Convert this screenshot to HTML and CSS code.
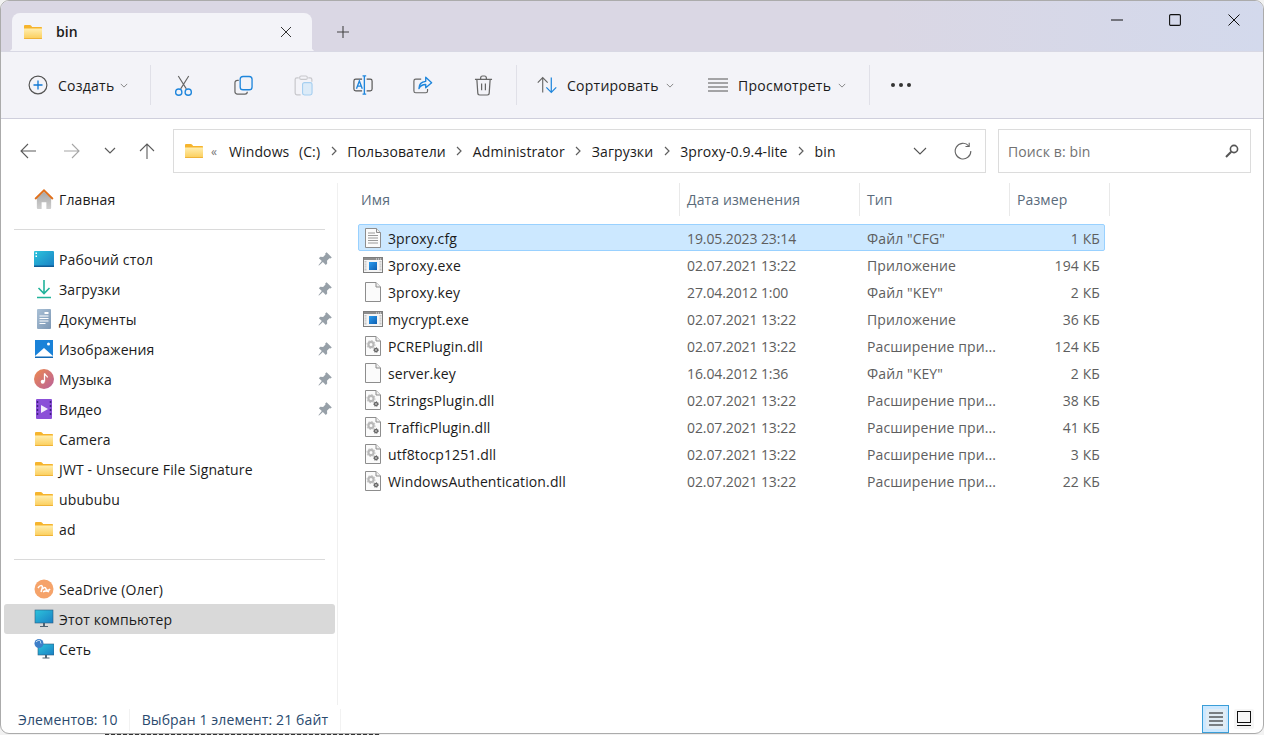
FILE: index.html
```html
<!DOCTYPE html>
<html lang="ru">
<head>
<meta charset="utf-8">
<title>bin</title>
<link rel="stylesheet" href="styles.css">
</head>
<body>
<svg class="defs" width="0" height="0" aria-hidden="true">
  <defs>
    <linearGradient id="fg" x1="0" y1="0" x2="0" y2="1"><stop offset="0" stop-color="#ffeeb0"/><stop offset="1" stop-color="#fbcd58"/></linearGradient>
    <linearGradient id="mon" x1="0" y1="0" x2="1" y2="1"><stop offset="0" stop-color="#2cc4dc"/><stop offset="1" stop-color="#1a7fc4"/></linearGradient>
    <linearGradient id="mus" x1="0" y1="0" x2="1" y2="1"><stop offset="0" stop-color="#ee8a4e"/><stop offset="1" stop-color="#b8609c"/></linearGradient>
    <linearGradient id="doc" x1="0" y1="0" x2="1" y2="1"><stop offset="0" stop-color="#a9c0d6"/><stop offset="1" stop-color="#7c97b4"/></linearGradient>
    <linearGradient id="exe" x1="0" y1="0" x2="1" y2="1"><stop offset="0" stop-color="#2a9cf0"/><stop offset="1" stop-color="#0f5fb0"/></linearGradient>
    <linearGradient id="home" x1="0" y1="0" x2="0" y2="1"><stop offset="0" stop-color="#a8a8a8"/><stop offset="1" stop-color="#cfcfcf"/></linearGradient>
    <symbol id="folder" viewBox="0 0 18 14"><path d="M0 1.200C0 .5.5 0 1.200 0h4.600c.5 0 .9.2 1.200.6L8.200 2H17c.6 0 1 .4 1 1v10c0 .6-.4 1-1 1H1c-.6 0-1-.4-1-1z" fill="#f6b42c"/><path d="M0 3.600h18V13c0 .6-.4 1-1 1H1c-.6 0-1-.4-1-1z" fill="url(#fg)"/><path d="M0 13h18c0 .6-.4 1-1 1H1c-.6 0-1-.4-1-1z" fill="#eeb238"/></symbol>
    <symbol id="chev" viewBox="0 0 10 6"><path d="M1 1l4 4 4-4" fill="none" stroke="currentColor" stroke-width="1"/></symbol>
    <symbol id="crumb" viewBox="0 0 6 10"><path d="M1 1l4 4-4 4" fill="none" stroke="currentColor" stroke-width="1.200"/></symbol>
    <symbol id="pin" viewBox="0 0 14 14"><path d="M8.600.2l5.200 5.200-1.400 1.200-1-.3-2.400 2.400.2 2.800-1.400 1.400-2.900-2.900L1 13.600l-.6-.4 3.400-4.100L.9 6.200l1.400-1.400 2.800.2 2.400-2.400-.3-1z" fill="#97a0a8"/></symbol>
    <symbol id="f-doc" viewBox="0 0 16 20"><path d="M.5.5h11l4 4v15H.5z" fill="#fbfbfb" stroke="#8d8d8d"/><path d="M11.500.5v4h4" fill="#eee" stroke="#8d8d8d"/><path d="M3 5h7M3 7.500h10M3 10h10M3 12.500h10M3 15h10" stroke="#9a9a9a" fill="none"/></symbol>
    <symbol id="f-blank" viewBox="0 0 16 20"><path d="M.5.5h10.500l4.500 4.500v14.500H.5z" fill="#fbfbfb" stroke="#8d8d8d"/><path d="M11 .5v4.500h4.500" fill="#f0f0f0" stroke="#8d8d8d"/></symbol>
    <symbol id="f-exe" viewBox="0 0 20 16"><rect x=".5" y=".5" width="19" height="15" fill="#f5f5f5" stroke="#7d7d7d"/><rect x="1" y="1" width="18" height="2" fill="#8d8d8d"/><path d="M13 2h1M15 2h1M17 2h1" stroke="#eee"/><path d="M2.500 4v10M17.500 4v10" stroke="#c4c4c4" stroke-width="2" stroke-dasharray="1 .6"/><rect x="6" y="5" width="8" height="8" fill="url(#exe)"/></symbol>
    <symbol id="f-dll" viewBox="0 0 16 20"><path d="M.5.5h10.500l4.500 4.500v14.500H.5z" fill="#fbfbfb" stroke="#8d8d8d"/><path d="M11 .5v4.500h4.500" fill="#f0f0f0" stroke="#8d8d8d"/><circle cx="6" cy="8.500" r="2.600" fill="none" stroke="#b8b8b8" stroke-width="2.200"/><circle cx="6" cy="8.500" r="4" fill="none" stroke="#c8c8c8" stroke-width="1.200" stroke-dasharray="1.500 1.600"/><circle cx="11" cy="14" r="1.500" fill="none" stroke="#666" stroke-width="1.400"/><circle cx="11" cy="14" r="2.500" fill="none" stroke="#777" stroke-width=".9" stroke-dasharray="1.100 1.200"/></symbol>
  </defs>
</svg>

<div class="window">
  <header class="tabbar">
    <div class="tab">
      <svg class="folder-icon"><use href="#folder"/></svg>
      <span class="tab-title">bin</span>
      <svg class="tab-close" viewBox="0 0 12 12"><path d="M1 1l10 10M11 1L1 11" stroke="#333" fill="none"/></svg>
    </div>
    <svg class="tab-new" viewBox="0 0 12 12"><path d="M6 0v12M0 6h12" stroke="#444" stroke-width="1.100" fill="none"/></svg>
    <div class="win-controls">
      <button class="win-btn"><svg viewBox="0 0 12 12" class="win-glyph"><path d="M0 6h12" stroke="#111" fill="none"/></svg></button>
      <button class="win-btn"><svg viewBox="0 0 12 12" class="win-glyph"><rect x=".6" y=".6" width="10.800" height="10.800" rx="1.200" stroke="#111" stroke-width="1.100" fill="none"/></svg></button>
      <button class="win-btn"><svg viewBox="0 0 12 12" class="win-glyph"><path d="M.5.5l11 11M11.500.5l-11 11" stroke="#111" fill="none"/></svg></button>
    </div>
  </header>

  <div class="toolbar">
    <div class="tool tool-new">
      <svg class="tool-svg" viewBox="0 0 20 20"><circle cx="10" cy="10" r="8.900" fill="none" stroke="#555" stroke-width="1.200"/><path d="M10 5.500v9M5.500 10h9" stroke="#0f78d4" stroke-width="1.300" fill="none"/></svg>
      <span>Создать</span>
      <svg class="tool-chev"><use href="#chev"/></svg>
    </div>
    <i class="tool-sep"></i>
    <div class="icon-tool"><svg class="tool-svg tall" viewBox="0 0 20 22"><path d="M4.500 1L13 14.500M15.500 1L7 14.500" stroke="#666" stroke-width="1.200" fill="none"/><circle cx="5" cy="18" r="3.300" fill="none" stroke="#1f86dc" stroke-width="1.400"/><circle cx="15" cy="18" r="3.300" fill="none" stroke="#1f86dc" stroke-width="1.400"/></svg></div>
    <div class="icon-tool"><svg class="tool-svg tall" viewBox="0 0 20 22"><path d="M5 5.500H3.500A2.500 2.500 0 0 0 1 8v9.500A2.500 2.500 0 0 0 3.500 20h8a2.500 2.500 0 0 0 2.500-2.500" stroke="#666" stroke-width="1.300" fill="none"/><rect x="6.500" y="1.500" width="12.500" height="14" rx="3" fill="#f3f3f8" stroke="#1f86dc" stroke-width="1.400"/></svg></div>
    <div class="icon-tool"><svg class="tool-svg tall" viewBox="0 0 20 22"><path d="M5 3H3a1.800 1.800 0 0 0-1.800 1.800V19A1.800 1.800 0 0 0 3 20.800h4M15 3h2a1.800 1.800 0 0 1 1.800 1.800V7" stroke="#c8c8cc" stroke-width="1.300" fill="none"/><rect x="6" y="1" width="8" height="3.500" rx="1.500" fill="none" stroke="#c8c8cc" stroke-width="1.200"/><rect x="9" y="8" width="10" height="13" rx="2" fill="#dcebf8" stroke="#a6cff0" stroke-width="1.200"/></svg></div>
    <div class="icon-tool"><svg class="tool-svg wide" viewBox="0 0 22 22"><path d="M10 4.500H3a2 2 0 0 0-2 2v9a2 2 0 0 0 2 2h7M15 4.500h4a2 2 0 0 1 2 2v9a2 2 0 0 1-2 2h-4" stroke="#555" stroke-width="1.300" fill="none"/><path d="M3.800 15L7 6.500l3.200 8.500M5 12.300h4.200" stroke="#1f86dc" stroke-width="1.500" fill="none"/><path d="M12.500 1v20M10.500 1h4M10.500 21h4" stroke="#1f86dc" stroke-width="1.500" fill="none"/></svg></div>
    <div class="icon-tool"><svg class="tool-svg wide" viewBox="0 0 22 22"><path d="M9 4.500H3a2 2 0 0 0-2 2v11a2 2 0 0 0 2 2h11a2 2 0 0 0 2-2v-2" stroke="#666" stroke-width="1.300" fill="none"/><path d="M14 2.500l6.500 6-6.500 5.500v-3.500c-3.500 0-6 1.500-7.500 4.500 0-5 2.500-7.500 7.500-8z" stroke="#1f86dc" stroke-width="1.500" fill="none" stroke-linejoin="round"/></svg></div>
    <div class="icon-tool"><svg class="tool-svg tall" viewBox="0 0 20 22"><path d="M1 4.500h18M7 4.500V3a2 2 0 0 1 2-2h2a2 2 0 0 1 2 2v1.500M3 4.500l1 14.500a2 2 0 0 0 2 2h8a2 2 0 0 0 2-2l1-14.500" stroke="#666" stroke-width="1.300" fill="none"/><path d="M8 9v7M12 9v7" stroke="#666" stroke-width="1.300" fill="none"/></svg></div>
    <i class="tool-sep"></i>
    <div class="tool tool-sort">
      <svg class="tool-svg wide" viewBox="0 0 21 18"><path d="M6 17V1.500M.8 6.500L6 1.200l5.200 5.300" stroke="#666" stroke-width="1.200" fill="none"/><path d="M15 1v15.500M9.800 11.500L15 16.800l5.200-5.300" stroke="#1f86dc" stroke-width="1.300" fill="none"/></svg>
      <span>Сортировать</span>
      <svg class="tool-chev"><use href="#chev"/></svg>
    </div>
    <div class="tool tool-view">
      <svg class="tool-svg wide" viewBox="0 0 20 14"><path d="M0 1h20M0 5h20M0 9h20M0 13h20" stroke="#555" stroke-width="1" fill="none"/></svg>
      <span>Просмотреть</span>
      <svg class="tool-chev"><use href="#chev"/></svg>
    </div>
    <i class="tool-sep sep-last"></i>
    <div class="tool-more"><b></b><b></b><b></b></div>
  </div>

  <div class="navbar">
    <div class="nav-btn"><svg class="nav-glyph" viewBox="0 0 16 16"><path d="M16 8H1M8 1L1 8l7 7" stroke="#5c5c5c" stroke-width="1.100" fill="none"/></svg></div>
    <div class="nav-btn nav-off"><svg class="nav-glyph" viewBox="0 0 16 16"><path d="M0 8h15M8 1l7 7-7 7" stroke="#a6a6a6" stroke-width="1.100" fill="none"/></svg></div>
    <div class="nav-btn nav-small"><svg class="nav-chev" viewBox="0 0 12 7"><path d="M1 1l5 5 5-5" stroke="#5c5c5c" stroke-width="1.200" fill="none"/></svg></div>
    <div class="nav-btn nav-up"><svg class="nav-glyph" viewBox="0 0 16 16"><path d="M8 16V1M1 8l7-7 7 7" stroke="#5c5c5c" stroke-width="1.100" fill="none"/></svg></div>
    <div class="address">
      <svg class="folder-icon"><use href="#folder"/></svg>
      <span class="more-crumbs">«</span>
      <span class="crumb crumb-drive">Windows&nbsp; (C:)</span><svg class="crumb-sep"><use href="#crumb"/></svg>
      <span class="crumb">Пользователи</span><svg class="crumb-sep"><use href="#crumb"/></svg>
      <span class="crumb">Administrator</span><svg class="crumb-sep"><use href="#crumb"/></svg>
      <span class="crumb">Загрузки</span><svg class="crumb-sep"><use href="#crumb"/></svg>
      <span class="crumb">3proxy-0.9.4-lite</span><svg class="crumb-sep"><use href="#crumb"/></svg>
      <span class="crumb">bin</span>
      <svg class="addr-chev" viewBox="0 0 14 8"><path d="M1 1l6 6 6-6" stroke="#555" stroke-width="1.100" fill="none"/></svg>
      <svg class="addr-refresh" viewBox="0 0 18 18"><path d="M14.700 3.800A7.800 7.800 0 1 0 16.800 9" stroke="#666" stroke-width="1.100" fill="none"/><path d="M15.200.8v3.700h-3.700" stroke="#666" stroke-width="1.100" fill="none"/></svg>
    </div>
    <div class="search">
      <span>Поиск в: bin</span>
      <svg class="search-icon" viewBox="0 0 14 14"><circle cx="9" cy="5" r="3.600" fill="none" stroke="#555" stroke-width="1.600"/><path d="M6.200 7.800L1 13" stroke="#555" stroke-width="2" fill="none"/></svg>
    </div>
  </div>

  <div class="content">
    <nav class="sidebar">
      <div class="side-item"><svg class="side-icon" viewBox="0 0 20 21"><path d="M2.500 9.500V20a1 1 0 0 0 1 1h4v-7h5v7h4a1 1 0 0 0 1-1V9.500L10 3z" fill="url(#home)"/><path d="M.7 10.500L10 1.500l9.300 9" fill="none" stroke="#e0701c" stroke-width="2"/></svg><span>Главная</span></div>
      <hr class="side-rule">
      <div class="side-item"><svg class="side-icon" viewBox="0 0 20 20"><rect y="2" width="20" height="16" rx="1" fill="url(#mon)"/><path d="M0 16.500h20V18H0z" fill="#115d96"/><rect x="1.500" y="3.500" width="1.500" height="1.500" fill="#fff"/><rect x="1.500" y="6.500" width="1.500" height="1.500" fill="#fff"/></svg><span>Рабочий стол</span><svg class="pin"><use href="#pin"/></svg></div>
      <div class="side-item"><svg class="side-icon" viewBox="0 0 20 20"><path d="M10 1v13M4.500 9l5.500 5.500L15.500 9" fill="none" stroke="#21b39b" stroke-width="1.600"/><path d="M3 18.500h14" stroke="#21b39b" stroke-width="1.500"/></svg><span>Загрузки</span><svg class="pin"><use href="#pin"/></svg></div>
      <div class="side-item"><svg class="side-icon" viewBox="0 0 20 20"><rect x="3" y="0" width="14" height="20" rx="1" fill="url(#doc)"/><path d="M5.500 7h9M5.500 9.500h9M5.500 12h9M5.500 14.500h6" stroke="#fff" stroke-width="1"/><rect x="10.500" y="3" width="4" height="2" fill="#fff"/></svg><span>Документы</span><svg class="pin"><use href="#pin"/></svg></div>
      <div class="side-item"><svg class="side-icon" viewBox="0 0 20 20"><rect x="1" y="1" width="18" height="18" fill="#1a82d8"/><path d="M1 17l9-8 9 8v2H1z" fill="#fff"/><path d="M1 17.500h18V19H1z" fill="#1168b4"/><circle cx="14.500" cy="5" r="1.500" fill="#fff"/></svg><span>Изображения</span><svg class="pin"><use href="#pin"/></svg></div>
      <div class="side-item"><svg class="side-icon" viewBox="0 0 20 20"><circle cx="10" cy="10" r="10" fill="url(#mus)"/><path d="M10.500 4.500v8" stroke="#fff" stroke-width="1.300"/><path d="M10.500 4.500c.5 2 3 2 3 4" stroke="#fff" stroke-width="1.300" fill="none"/><circle cx="8.700" cy="12.800" r="2" fill="#fff"/></svg><span>Музыка</span><svg class="pin"><use href="#pin"/></svg></div>
      <div class="side-item"><svg class="side-icon" viewBox="0 0 20 20"><rect x="2" y="0" width="16" height="20" rx="1" fill="#8b4fd8"/><path d="M7 6v8l7-4z" fill="#f3ecfc"/><path d="M3.500 2v16M16.500 2v16" stroke="#3f1f80" stroke-width="1.500" stroke-dasharray="2 2"/></svg><span>Видео</span><svg class="pin"><use href="#pin"/></svg></div>
      <div class="side-item"><svg class="side-folder"><use href="#folder"/></svg><span>Camera</span></div>
      <div class="side-item"><svg class="side-folder"><use href="#folder"/></svg><span>JWT - Unsecure File Signature</span></div>
      <div class="side-item"><svg class="side-folder"><use href="#folder"/></svg><span>ubububu</span></div>
      <div class="side-item"><svg class="side-folder"><use href="#folder"/></svg><span>ad</span></div>
      <hr class="side-rule">
      <div class="side-item"><svg class="side-icon" viewBox="0 0 20 20"><circle cx="10" cy="10" r="9.500" fill="#f5a36a"/><path d="M4 9c2-3 4-3 4.500-1L7 13M8.500 10c2-2 3-2 3.500 0s3 1.500 4 0M9 13c2-1.500 4-1.500 6 0" stroke="#fff" stroke-width="1.500" fill="none"/></svg><span>SeaDrive (Олег)</span></div>
      <div class="side-item is-current"><svg class="side-icon" viewBox="0 0 20 20"><rect x="1" y="1" width="18" height="13" fill="url(#mon)" stroke="#2d5d80" stroke-width=".6"/><path d="M9 14h2v3H9zM6 17h8v1H6z" fill="#4f6373"/></svg><span>Этот компьютер</span></div>
      <div class="side-item"><svg class="side-icon" viewBox="0 0 20 20"><rect x="4" y="5" width="16" height="11" fill="url(#mon)" stroke="#2d5d80" stroke-width=".6"/><path d="M11 16h2v2.500h-2zM8.500 18.500h7v1h-7z" fill="#4f6373"/><circle cx="5" cy="4.500" r="4.500" fill="#3d7fc8"/><path d="M2 3c1.500-1.500 3-2 4-1.500s0 2 1 3" stroke="#cfe4f7" fill="none"/></svg><span>Сеть</span></div>
    </nav>

    <main class="files">
      <div class="file-head">
        <span class="col-name">Имя</span>
        <span class="col">Дата изменения</span>
        <span class="col">Тип</span>
        <span class="col col-last">Размер</span>
      </div>
      <div class="file-rows">
        <div class="file-row is-selected"><svg class="ficon"><use href="#f-doc"/></svg><span class="fname">3proxy.cfg</span><span class="fmeta fdate">19.05.2023 23:14</span><span class="fmeta">Файл "CFG"</span><span class="fsize">1 КБ</span></div>
        <div class="file-row"><svg class="ficon"><use href="#f-exe"/></svg><span class="fname">3proxy.exe</span><span class="fmeta fdate">02.07.2021 13:22</span><span class="fmeta">Приложение</span><span class="fsize">194 КБ</span></div>
        <div class="file-row"><svg class="ficon"><use href="#f-blank"/></svg><span class="fname">3proxy.key</span><span class="fmeta fdate">27.04.2012 1:00</span><span class="fmeta">Файл "KEY"</span><span class="fsize">2 КБ</span></div>
        <div class="file-row"><svg class="ficon"><use href="#f-exe"/></svg><span class="fname">mycrypt.exe</span><span class="fmeta fdate">02.07.2021 13:22</span><span class="fmeta">Приложение</span><span class="fsize">36 КБ</span></div>
        <div class="file-row"><svg class="ficon"><use href="#f-dll"/></svg><span class="fname">PCREPlugin.dll</span><span class="fmeta fdate">02.07.2021 13:22</span><span class="fmeta">Расширение при...</span><span class="fsize">124 КБ</span></div>
        <div class="file-row"><svg class="ficon"><use href="#f-blank"/></svg><span class="fname">server.key</span><span class="fmeta fdate">16.04.2012 1:36</span><span class="fmeta">Файл "KEY"</span><span class="fsize">2 КБ</span></div>
        <div class="file-row"><svg class="ficon"><use href="#f-dll"/></svg><span class="fname">StringsPlugin.dll</span><span class="fmeta fdate">02.07.2021 13:22</span><span class="fmeta">Расширение при...</span><span class="fsize">38 КБ</span></div>
        <div class="file-row"><svg class="ficon"><use href="#f-dll"/></svg><span class="fname">TrafficPlugin.dll</span><span class="fmeta fdate">02.07.2021 13:22</span><span class="fmeta">Расширение при...</span><span class="fsize">41 КБ</span></div>
        <div class="file-row"><svg class="ficon"><use href="#f-dll"/></svg><span class="fname">utf8tocp1251.dll</span><span class="fmeta fdate">02.07.2021 13:22</span><span class="fmeta">Расширение при...</span><span class="fsize">3 КБ</span></div>
        <div class="file-row"><svg class="ficon"><use href="#f-dll"/></svg><span class="fname">WindowsAuthentication.dll</span><span class="fmeta fdate">02.07.2021 13:22</span><span class="fmeta">Расширение при...</span><span class="fsize">22 КБ</span></div>
      </div>
    </main>
  </div>

  <footer class="statusbar">
    <span class="stat">Элементов: 10</span>
    <span class="stat">Выбран 1 элемент: 21 байт</span>
    <div class="view-switch">
      <div class="view-btn is-on"><div class="view-inner"><svg class="view-glyph" viewBox="0 0 14 14"><path d="M0 1h14M0 5h14M0 9h14M0 13h14" stroke="#111" fill="none"/></svg></div></div>
      <div class="view-btn"><div class="view-inner"><svg class="view-glyph" viewBox="0 0 14 14"><rect x=".5" y="-.5" width="13" height="11" fill="none" stroke="#111"/><path d="M0 13.500h14" stroke="#111"/></svg></div></div>
    </div>
  </footer>
</div>
</body>
</html>
```
FILE: styles.css
```css
* { box-sizing: border-box; }
html, body { margin: 0; padding: 0; }
body {
  width: 1264px;
  height: 735px;
  overflow: hidden;
  background: repeating-linear-gradient(90deg, #333 0 4px, #ddd 4px 6px) no-repeat 105px 734px / 275px 1px, #f2f2f2;
  font-family: "Open Sans", "Noto Sans", sans-serif;
  font-size: 14px;
  letter-spacing: .12px;
  color: #1b1b1b;
}
.defs { position: absolute; }
svg { display: block; flex: none; }
button { border: 0; background: none; padding: 0; }

.window {
  width: 1264px;
  height: 734px;
  display: flex;
  flex-direction: column;
  background: #fff;
  border: 1px solid #ababab;
  border-radius: 9px;
  overflow: hidden;
}

/* title bar */
.tabbar {
  height: 50px;
  flex: none;
  display: flex;
  align-items: flex-end;
  padding-left: 11px;
  background: linear-gradient(90deg, #dad7e4 0%, #dad7e4 70%, #d3d9ec 100%);
}
.tab {
  position: relative;
  width: 300px;
  height: 38px;
  display: flex;
  align-items: center;
  padding: 0 20px 0 12px;
  background: #f3f3f8;
  border-radius: 8px 8px 0 0;
}
.tab::before, .tab::after {
  content: "";
  position: absolute;
  bottom: 0;
  width: 4px;
  height: 4px;
}
.tab::before { left: -4px; background: radial-gradient(circle at 0 0, transparent 4px, #f3f3f8 4.5px); }
.tab::after { right: -4px; background: radial-gradient(circle at 100% 0, transparent 4px, #f3f3f8 4.5px); }
.folder-icon { width: 18px; height: 14px; }
.tab-title { margin-left: 14px; font-size: 14px; font-weight: 600; line-height: 38px; flex: 1; }
.tab-close { width: 12px; height: 12px; }
.tab-new { width: 12px; height: 12px; margin: 0 0 13px 25px; }
.win-controls { margin-left: auto; align-self: flex-start; display: flex; }
.win-btn { width: 58.5px; height: 38px; display: flex; align-items: center; justify-content: center; }
.win-glyph { width: 12px; height: 12px; }

/* toolbar */
.toolbar {
  height: 68px;
  flex: none;
  display: flex;
  align-items: center;
  background: #f3f3f8;
  border-top: 1px solid #d8d8e4;
  border-bottom: 1px solid #cfcfdc;
  padding-left: 27px;
  letter-spacing: .25px;
}
.tool { display: flex; align-items: center; }
.tool-svg { width: 20px; height: 20px; }
.tool-svg.tall { width: 19px; height: 21px; }
.tool-svg.wide { width: 20px; height: 20px; }
.tool-new span { margin-left: 10px; }
.tool-chev { width: 8px; height: 5px; margin-left: 7px; color: #6d6d6d; }
.tool-new .tool-chev { margin-left: 6px; }
.tool-sep { width: 1px; height: 40px; background: #e0e0e8; flex: none; }
.tool-new { width: 122px; }
.icon-tool { width: 60px; display: flex; justify-content: center; }
.tool-new + .tool-sep { margin-right: 2px; }
.icon-tool + .tool-sep { margin-left: 3px; margin-right: 20px; }
.tool-sort { width: 171px; }
.tool-sort span, .tool-view span { margin-left: 10px; }
.tool-view { width: 161px; }
.tool-more { margin-left: 21px; display: flex; gap: 4px; }
.tool-more b { width: 4px; height: 4px; border-radius: 50%; background: #333; }

/* address row */
.navbar {
  height: 64px;
  flex: none;
  display: flex;
  align-items: flex-start;
  padding: 10px 12px 0 0;
}
.nav-btn { height: 43px; display: flex; align-items: center; justify-content: center; width: 44px; flex: none; }
.nav-btn:first-child { margin-left: 5px; }
.nav-small { width: 32px; }
.nav-up { width: 42px; margin-right: 5px; }
.nav-glyph { width: 16px; height: 16px; }
.nav-chev { width: 12px; height: 7px; }
.address {
  width: 813px;
  height: 44px;
  flex: none;
  display: flex;
  align-items: center;
  padding: 0 13px 0 11px;
  border: 1px solid #dcdcdc;
}
.more-crumbs { margin: 0 0 0 8px; width: 18px; color: #777; font-size: 12px; }
.crumb-drive { word-spacing: 1px; }
.crumb-sep { width: 6px; height: 10px; margin: 0 10.5px; color: #5f5f5f; }
.addr-chev { width: 14px; height: 8px; margin-left: auto; margin-right: 27px; }
.addr-refresh { width: 18px; height: 18px; }
.search {
  width: 253px;
  height: 44px;
  margin-left: 12px;
  flex: none;
  display: flex;
  align-items: center;
  justify-content: space-between;
  padding: 0 11px 0 9px;
  border: 1px solid #dcdcdc;
  color: #727272;
}
.search-icon { width: 14px; height: 14px; }

/* content */
.content { flex: 1; min-height: 0; display: flex; }
.sidebar {
  width: 337px;
  flex: none;
  padding: 1px 2px 0 3px;
  border-right: 1px solid #f0f0f0;
}
.side-item {
  height: 30px;
  display: flex;
  align-items: center;
  padding-left: 30px;
  border-radius: 3px;
}
.side-item span { margin-left: 5px; flex: 1; }
.side-icon { width: 20px; height: 20px; }
.side-folder { width: 18px; height: 14px; margin: 0 1px; }
.pin { width: 14px; height: 14px; margin-right: 3px; }
.is-current { background: #d9d9d9; }
.side-rule { height: 1px; margin: 15px 10px 14px 10px; border: 0; background: #dadada; }

.files { flex: 1; min-width: 0; padding-left: 20px; }
.file-head { height: 33px; display: flex; align-items: center; color: #5a6b7b; }
.col-name { width: 322px; height: 100%; padding-left: 3px; line-height: 33px; border-right: 1px solid #e9e9e9; }
.col { height: 100%; line-height: 33px; padding-left: 7px; border-right: 1px solid #e9e9e9; width: 180px; }
.col + .col { width: 150px; }
.col.col-last { width: 100px; }
.file-rows { margin-top: 8px; }
.file-row {
  width: 747px;
  height: 27px;
  display: grid;
  grid-template-columns: 29px 299px 180px 150px 1fr;
  align-items: center;
  padding-right: 4px;
  border: 1px solid transparent;
}
.is-selected { background: #cce8ff; border-color: #99d1ff; border-radius: 2px; }
.ficon { width: 20px; height: 20px; margin-left: 4px; }
.fname, .fmeta, .fsize { padding-top: 2px; }
.fmeta { color: #5e5e5e; }
.fdate { letter-spacing: -.1px; }
.fsize { text-align: right; color: #5e5e5e; }

/* status */
.statusbar {
  height: 28px;
  flex: none;
  display: flex;
  align-items: center;
  padding-left: 17px;
  color: #2a4a6e;
}
.stat { padding-right: 11px; margin-right: 12px; margin-top: 2px; border-right: 1px solid #f2f2f2; line-height: 22px; }
.stat + .stat { margin-right: 0; padding-right: 12px; }
.view-switch { margin-left: auto; display: flex; align-items: center; align-self: stretch; padding-right: 9px; }
.view-btn { display: flex; }
.view-btn.is-on { width: 27px; height: 28px; align-items: center; justify-content: center; background: #cce8ff; border: 1px solid #3a9ed8; margin-right: 5px; }
.view-inner { width: 20px; height: 20px; display: flex; align-items: center; justify-content: center; background: #f6f6f6; border-radius: 2px; }
.is-on .view-inner { background: #e0ecf5; }
.view-glyph { width: 14px; height: 14px; overflow: visible; }
```
